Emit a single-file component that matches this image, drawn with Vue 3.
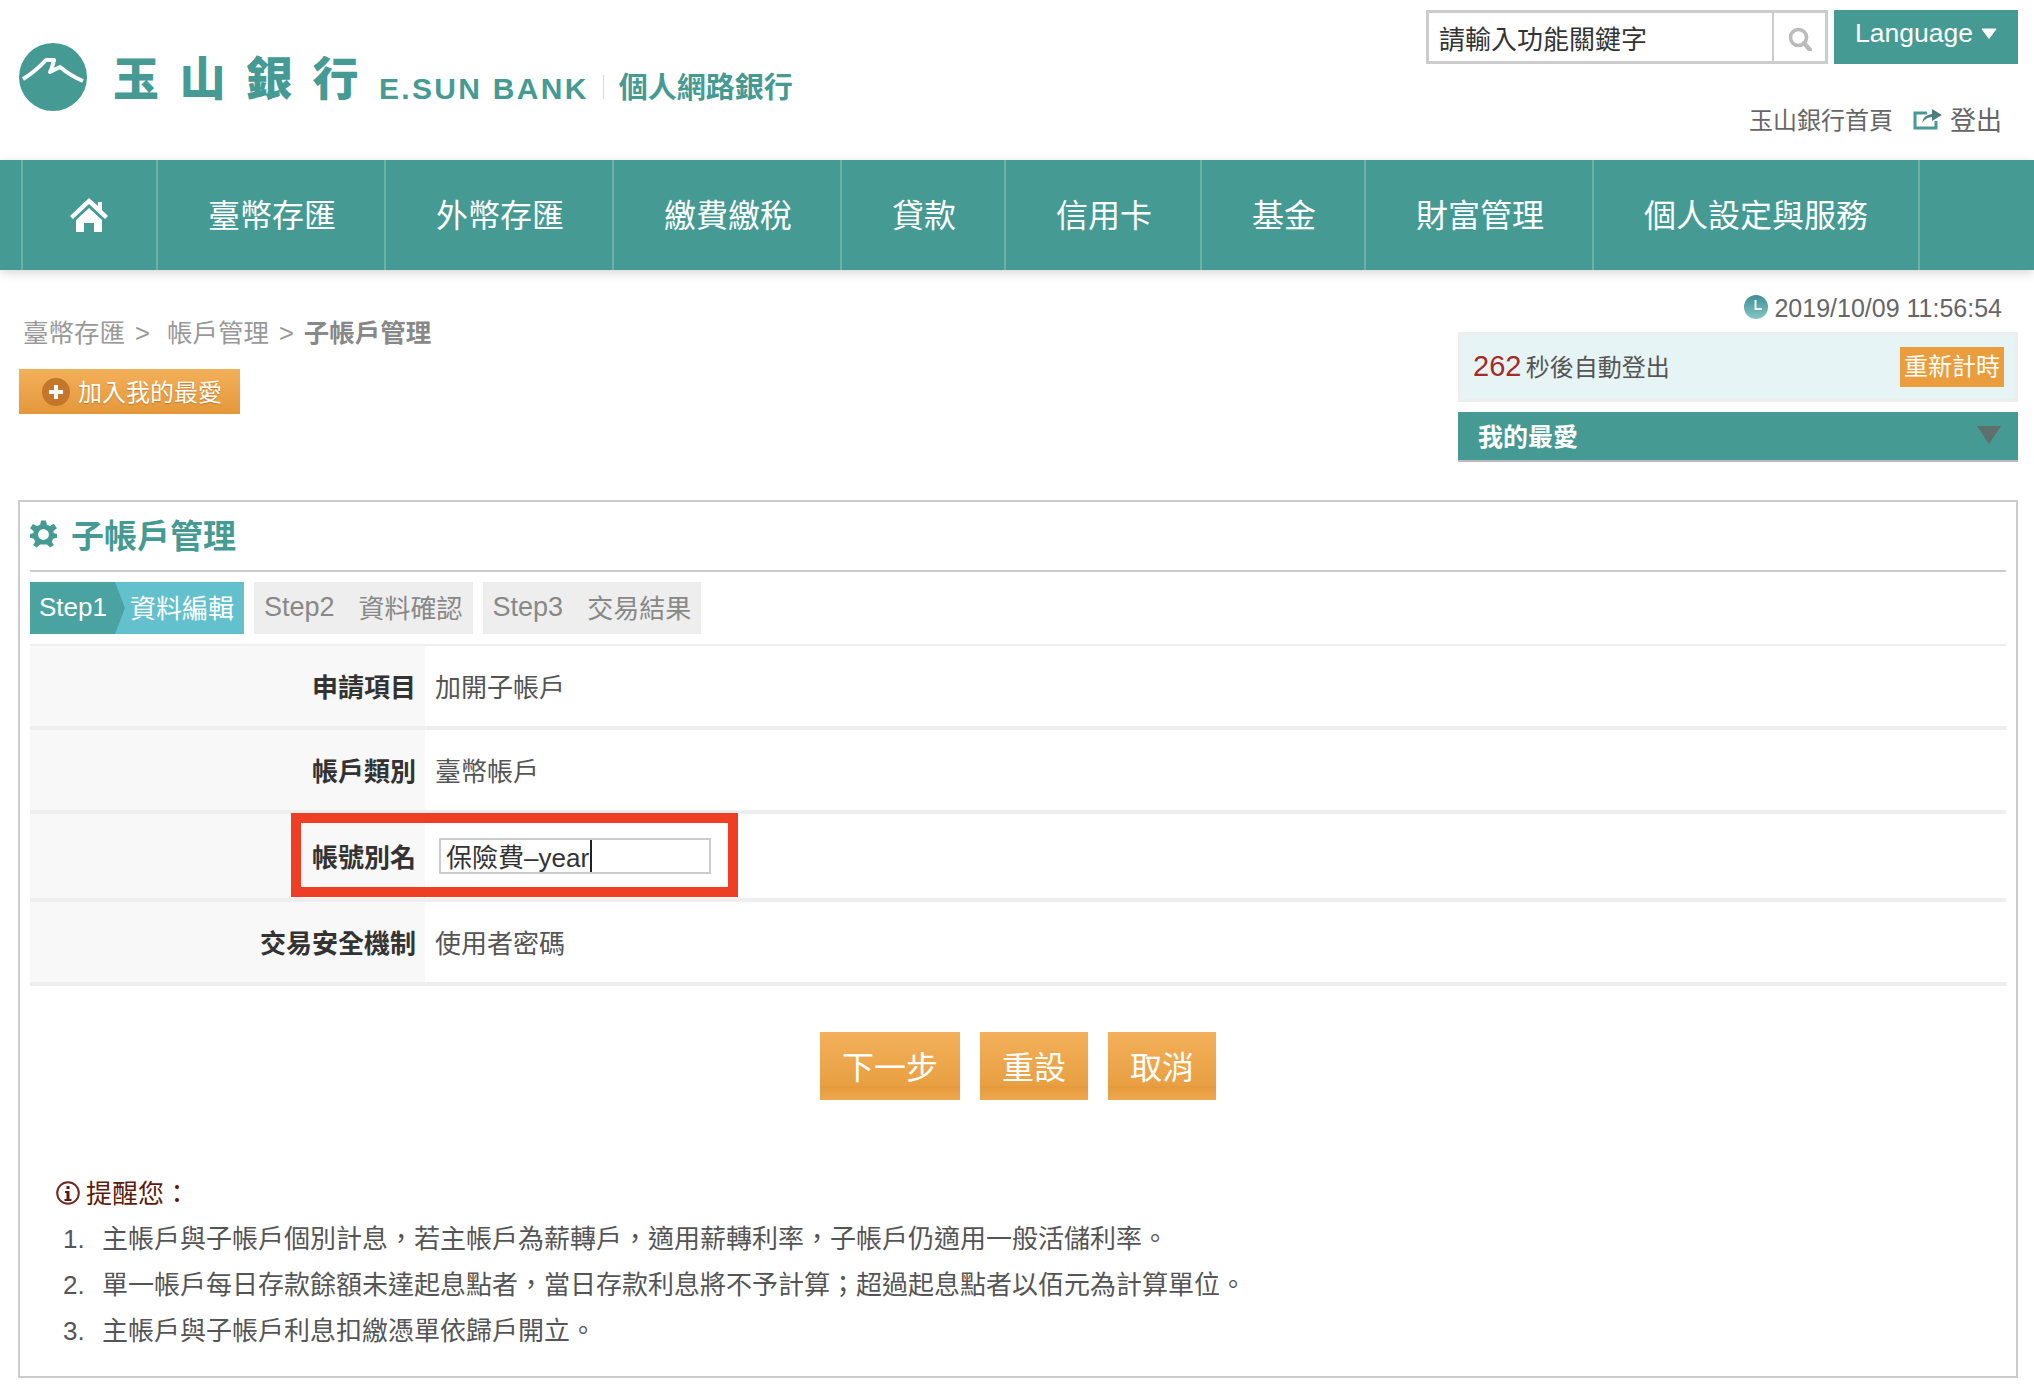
<template>
  <div class="page">

    <!-- HEADER -->
    <header class="header">
      <div class="logo">
        <svg class="logo-mark" viewBox="0 0 68 68">
          <circle cx="34" cy="34" r="34" fill="#459a93" />
          <path d="M4 36 Q16 29 27 17 L35 17 Q33 26 31 29 L41 24 Q52 33 64 38" fill="none" stroke="#fff" stroke-width="4" stroke-linejoin="round" />
        </svg>
        <span class="logo-zh">玉山銀行</span>
        <span class="logo-en">E.SUN BANK</span>
        <span class="logo-line"></span>
        <span class="logo-sub">個人網路銀行</span>
      </div>

      <div class="header-right">
        <div class="search-row">
          <div class="search">
            <span class="search-text">請輸入功能關鍵字</span>
            <span class="search-btn">
              <svg viewBox="0 0 24 24" width="24" height="24">
                <circle cx="10.5" cy="10.5" r="8" fill="none" stroke="#bbb" stroke-width="3.6" />
                <path d="M16 16 L22 23" stroke="#bbb" stroke-width="4.4" stroke-linecap="round" />
              </svg>
            </span>
          </div>
          <div class="lang">
            Language
            <svg viewBox="0 0 16 11" width="16" height="11"><path d="M1 1 H15 L8 10.5 Z" fill="#fff" stroke="#fff" stroke-linejoin="round" /></svg>
          </div>
        </div>
        <div class="links">
          <span class="link-home">玉山銀行首頁</span>
          <svg class="logout-icon" viewBox="0 0 30 24" width="30" height="24">
            <path d="M14 7 H2 V22 H23 V15" fill="none" stroke="#459a93" stroke-width="3" />
            <path d="M9 17 Q10 9 19 8 V3 L29 9 L19 15 V11 Q13 11 9 17 Z" fill="#4f7f7c" />
          </svg>
          <span class="link-out">登出</span>
        </div>
      </div>
    </header>

    <!-- NAV -->
    <nav class="nav">
      <div class="nav-item nav-home">
        <svg viewBox="0 0 38 34" width="38" height="34">
          <path d="M19 0 L0 18 L3 21 L19 6 L35 21 L38 18 L32 12 V4 H28 V8 Z" fill="#fff" />
          <path d="M6 22 L19 10 L32 22 V34 H24 V25 H14 V34 H6 Z" fill="#fff" />
        </svg>
      </div>
      <div class="nav-item" v-for="item in navItems" :key="item">{{ item }}</div>
    </nav>

    <!-- TOP AREA -->
    <section class="top">
      <div class="top-left">
        <div class="crumb">
          <span>臺幣存匯</span><i class="arrow-a">&gt;</i><span>帳戶管理</span><i class="arrow-b">&gt;</i><b>子帳戶管理</b>
        </div>
        <div class="fav-btn">
          <span class="plus"></span>
          <span class="fav-text">加入我的最愛</span>
        </div>
      </div>

      <div class="top-right">
        <div class="date">
          <svg viewBox="0 0 24 24" width="24" height="24">
            <defs>
              <linearGradient id="clockFill" x1="0" y1="0" x2="0" y2="1">
                <stop offset="0" stop-color="#3f8f95" />
                <stop offset="1" stop-color="#86c6c4" />
              </linearGradient>
            </defs>
            <circle cx="12" cy="12" r="12" fill="url(#clockFill)" />
            <path d="M11.5 5 V14 H18" fill="none" stroke="#e8f5f5" stroke-width="2" />
          </svg>
          <span class="date-text">2019/10/09 11:56:54</span>
        </div>
        <div class="countdown">
          <div class="count-text"><span class="sec">262</span> <span class="sec-text">秒後自動登出</span></div>
          <span class="reset">重新計時</span>
        </div>
        <div class="favorites">
          <span>我的最愛</span>
          <svg viewBox="0 0 24 18" width="24" height="18"><path d="M0 0 H24 L12 18 Z" fill="#5f6f6c" /></svg>
        </div>
      </div>
    </section>

    <!-- MAIN BOX -->
    <main class="box">
      <div class="title">
        <svg viewBox="0 0 28 28" width="27" height="28">
          <path d="M11.5 0 H16.5 L17.5 4.4 L20.8 5.8 L24.6 3.4 L24.9 3.6 L27.9 8 L24.4 10.9 L24.4 13 L28 14 L28 18 L24 19 L22.6 22 L24.8 25.4 L21 28 L17.6 25 L10.4 25 L7 28 L3.2 25.4 L5.4 22 L4 19 L0 18 L0 14 L3.6 13 L3.6 10.9 L0.1 8 L3.1 3.6 L7.2 5.8 L10.5 4.4 Z" fill="#459a93" />
          <circle cx="14" cy="14.5" r="5.6" fill="#fff" />
        </svg>
        <h1>子帳戶管理</h1>
      </div>

      <div class="steps">
        <div class="step step-on">
          <span class="step-no">Step1</span>
          <span class="step-name">資料編輯</span>
        </div>
        <div class="step">
          <span class="step-latin">Step2</span>
          <span class="step-name">資料確認</span>
        </div>
        <div class="step">
          <span class="step-latin">Step3</span>
          <span class="step-name">交易結果</span>
        </div>
      </div>

      <div class="form">
        <div class="row" :class="{ 'row-input': row.input }" v-for="row in rows" :key="row.label">
          <div class="label">{{ row.label }}</div>
          <div class="value" v-if="!row.input">{{ row.value }}</div>
          <div class="value" v-else>
            <div class="alias">{{ row.value }}<span class="caret"></span></div>
          </div>
          <div class="mark" v-if="row.input"></div>
        </div>
      </div>

      <div class="buttons">
        <div class="btn">下一步</div>
        <div class="btn">重設</div>
        <div class="btn">取消</div>
      </div>

      <div class="notes">
        <div class="note-head">
          <svg viewBox="0 0 24 24" width="24" height="24">
            <circle cx="12" cy="12" r="10.8" fill="#fff" stroke="#6b2a20" stroke-width="2" />
            <rect x="10.5" y="5" width="3" height="3" fill="#5c1a0a" />
            <path d="M9 10 H13.5 V18 H15.5 V20 H8.5 V18 H10.5 V12 H9 Z" fill="#5c1a0a" />
          </svg>
          <span class="note-title">提醒您：</span>
        </div>
        <ol class="note-list">
          <li v-for="(note, index) in notes" :key="index">
            <span class="num">{{ index + 1 }}.</span>
            <span>{{ note }}</span>
          </li>
        </ol>
      </div>
    </main>

  </div>
</template>

<script setup>
const navItems = ['臺幣存匯', '外幣存匯', '繳費繳稅', '貸款', '信用卡', '基金', '財富管理', '個人設定與服務']

const rows = [
  { label: '申請項目', value: '加開子帳戶' },
  { label: '帳戶類別', value: '臺幣帳戶' },
  { label: '帳號別名', value: '保險費–year', input: true },
  { label: '交易安全機制', value: '使用者密碼' }
]

const notes = [
  '主帳戶與子帳戶個別計息，若主帳戶為薪轉戶，適用薪轉利率，子帳戶仍適用一般活儲利率。',
  '單一帳戶每日存款餘額未達起息點者，當日存款利息將不予計算；超過起息點者以佰元為計算單位。',
  '主帳戶與子帳戶利息扣繳憑單依歸戶開立。'
]
</script>

<style>
body{
  margin:0;
  background:#fff;
}
</style>

<style scoped>
.page{
  font-family:"Liberation Sans","Noto Sans CJK TC",sans-serif;
  color:#555;
}

.header{
  height:160px;
  display:flex;
  justify-content:space-between;
}

.logo{
  display:flex;
  align-items:center;
  padding-left:19px;
  height:154px;
  color:#459a93;
  font-weight:bold;
}

.logo-mark{
  width:68px;
  height:68px;
}

.logo-zh{
  font-size:46px;
  font-weight:900;
  letter-spacing:20.5px;
  margin-left:26px;
  margin-top:-5px;
}

.logo-en{
  font-size:30px;
  letter-spacing:2.3px;
  margin-left:0;
  margin-top:23px;
}

.logo-line{
  width:1px;
  height:24px;
  background:#cfdedc;
  margin:20px 15px 0 14px;
}

.logo-sub{
  font-size:29px;
  margin-top:16px;
}

.header-right{
  width:592px;
  margin-right:16px;
  padding-top:10px;
}

.search-row{
  display:flex;
  gap:6px;
}

.search{
  flex:1;
  height:54px;
  box-sizing:border-box;
  border:3px solid #ccc;
  display:flex;
  align-items:center;
}

.search-text{
  flex:1;
  font-size:26px;
  color:#333;
  padding-left:10px;
}

.search-btn{
  width:53px;
  height:100%;
  border-left:2px solid #ccc;
  display:flex;
  align-items:center;
  justify-content:center;
  box-sizing:border-box;
  padding-top:4px;
}

.lang{
  width:184px;
  height:54px;
  background:#459a93;
  color:#fff;
  font-size:26.5px;
  display:flex;
  align-items:center;
  justify-content:center;
  gap:8px;
  padding-bottom:8px;
  box-sizing:border-box;
}

.links{
  display:flex;
  justify-content:flex-end;
  align-items:center;
  height:30px;
  margin-top:39px;
  padding-right:16px;
  color:#666;
}

.link-home{
  font-size:24px;
}

.logout-icon{
  margin:0 7px 0 20px;
}

.link-out{
  font-size:26px;
}

.nav{
  height:110px;
  background:#459a93;
  display:flex;
  padding-left:21px;
  box-shadow:0 3px 10px rgba(0,0,0,.16);
  position:relative;
}

.nav-item{
  padding:0 50px 5px;
  color:#fff;
  font-size:32px;
  display:flex;
  align-items:center;
  border-left:2px solid #6cb0aa;
  margin-right:-2px;
}

.nav-item:last-child{
  border-right:2px solid #6cb0aa;
}

.nav-home{
  padding:0 0 0 47px;
  width:137px;
  box-sizing:border-box;
}

.top{
  height:230px;
  display:flex;
  justify-content:space-between;
}

.top-left{
  padding-top:45px;
}

.crumb{
  padding-left:23px;
  font-size:25.5px;
  line-height:36px;
  color:#999;
}

.crumb i{
  font-style:normal;
}

.arrow-a{
  margin:0 17px 0 10px;
}

.arrow-b{
  margin:0 10px;
}

.crumb b{
  color:#888;
}

.fav-btn{
  width:221px;
  height:45px;
  margin:18px 0 0 19px;
  box-sizing:border-box;
  background:linear-gradient(#f3b05a,#e4973a);
  color:#fff;
  font-size:24px;
  display:flex;
  align-items:center;
  padding-left:23px;
  gap:8px;
  text-shadow:0 1px 1px rgba(120,70,10,.4);
}

.fav-text{
  margin-top:-3px;
}

.plus{
  width:28px;
  height:28px;
  border-radius:50%;
  background:
    linear-gradient(#fff,#fff) center/14px 4px no-repeat,
    linear-gradient(#fff,#fff) center/4px 14px no-repeat,
    #c4772a;
}

.top-right{
  width:560px;
  margin-right:16px;
  padding-top:22px;
}

.date{
  height:30px;
  display:flex;
  justify-content:flex-end;
  align-items:center;
  gap:6px;
  padding-right:16px;
  font-size:25px;
  color:#666;
}

.date-text{
  margin-top:2px;
}

.countdown{
  height:70px;
  margin-top:10px;
  box-sizing:border-box;
  border:3px solid #eee;
  background:#e6f4f6;
  display:flex;
  justify-content:space-between;
  align-items:center;
  padding:0 11px 0 12px;
}

.count-text{
  margin-top:-4px;
}

.sec{
  color:#a52a2a;
  font-size:29px;
}

.sec-text{
  font-size:24px;
  color:#555;
}

.reset{
  width:104px;
  height:40px;
  padding-bottom:6px;
  box-sizing:border-box;
  background:#e99d3c;
  color:#fff;
  font-size:24px;
  display:flex;
  align-items:center;
  justify-content:center;
}

.favorites{
  height:50px;
  margin-top:10px;
  padding:0 17px 2px 20px;
  box-sizing:border-box;
  background:#459a93;
  border-bottom:2px solid #bbb;
  color:#fff;
  font-size:25px;
  font-weight:bold;
  display:flex;
  justify-content:space-between;
  align-items:center;
}

.box{
  margin:0 16px 0 18px;
  padding:0 10px 22px;
  border:2px solid #ccc;
}

.title{
  height:70px;
  padding-bottom:5px;
  box-sizing:border-box;
  display:flex;
  align-items:center;
  gap:14px;
  border-bottom:2px solid #ccc;
}

.title h1{
  margin:0;
  font-size:33px;
  color:#459a93;
}

.steps{
  display:flex;
  gap:10px;
  margin-top:10px;
}

.step{
  height:52px;
  padding:0 10px;
  background:#eee;
  color:#888;
  font-size:26px;
  display:flex;
  align-items:center;
  gap:24px;
}

.step-latin{
  font-size:27px;
  margin-top:-1px;
}

.step-name{
  margin-top:-4px;
}

.step-on{
  width:214px;
  box-sizing:border-box;
  padding:0;
  gap:5px;
  background:#62c1cd;
  color:#fff;
}

.step-no{
  width:95px;
  height:100%;
  box-sizing:border-box;
  padding:0 0 2px 9px;
  background:#4aa3a0;
  display:flex;
  align-items:center;
  clip-path:polygon(0 0,85px 0,95px 50%,85px 100%,0 100%);
}

.form{
  margin-top:10px;
  border-top:2px solid #eee;
}

.row{
  display:flex;
  height:84px;
  box-sizing:border-box;
  border-bottom:4px solid #eee;
  font-size:26px;
  position:relative;
}

.row-input{
  height:88px;
}

.label{
  width:395px;
  box-sizing:border-box;
  background:#f8f8f8;
  padding:0 9px 2px 0;
  font-weight:bold;
  color:#333;
  display:flex;
  align-items:center;
  justify-content:flex-end;
}

.value{
  padding:0 0 2px 10px;
  display:flex;
  align-items:center;
}

.row-input .value{
  padding-bottom:0;
}

.alias{
  width:272px;
  height:36px;
  margin-left:4px;
  box-sizing:border-box;
  border:2px solid #ccc;
  padding:0 0 2px 5px;
  color:#333;
  display:flex;
  align-items:center;
}

.caret{
  width:2px;
  height:32px;
  margin:0 0 -2px 1px;
  background:#222;
}

.mark{
  position:absolute;
  left:261px;
  top:-1px;
  width:447px;
  height:84px;
  box-sizing:border-box;
  border:10px solid #ee3e23;
}

.buttons{
  display:flex;
  justify-content:center;
  gap:20px;
  margin-top:46px;
}

.btn{
  height:68px;
  padding:0 22px 2px;
  box-sizing:border-box;
  background:linear-gradient(#f3b05a 0,#e89f42 80%,#e59a3c 80%,#eda94f 100%);
  color:#fff;
  font-size:32px;
  display:flex;
  align-items:center;
}

.notes{
  margin-top:75px;
  padding-left:26px;
}

.note-head{
  display:flex;
  align-items:center;
  gap:6px;
  height:36px;
  font-size:26px;
  color:#5c1a0a;
}

.note-title{
  margin-top:-4px;
}

.note-list{
  list-style:none;
  margin:5px 0 0 7px;
  padding:0;
  font-size:26px;
  line-height:46px;
}

.note-list li{
  display:flex;
}

.num{
  width:39px;
}
</style>
